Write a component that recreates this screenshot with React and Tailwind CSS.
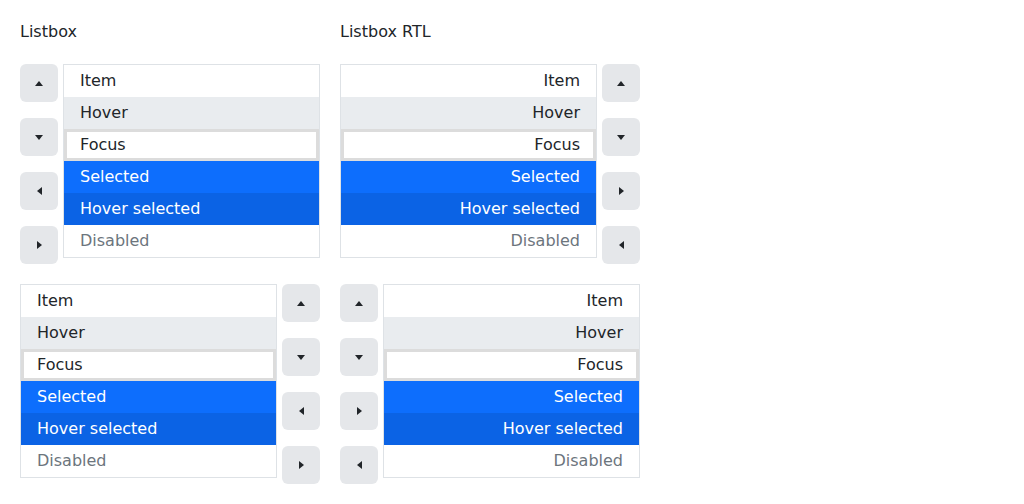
import React from "react";

const Tri = ({ dir }) => {
  const paths = {
    up: "M0 5 L4 0 L8 5 Z",
    down: "M0 0 L8 0 L4 5 Z",
    left: "M5 0 L5 8 L0 4 Z",
    right: "M0 0 L5 4 L0 8 Z",
  };
  const vert = dir === "up" || dir === "down";
  return (
    <svg
      width={vert ? 8 : 5}
      height={vert ? 5 : 8}
      viewBox={vert ? "0 0 8 5" : "0 0 5 8"}
    >
      <path d={paths[dir]} fill="#212529" />
    </svg>
  );
};

const Btn = ({ dir }) => (
  <button className="w-[38px] h-[38px] rounded-md bg-[#e5e7ea] flex items-center justify-center">
    <Tri dir={dir} />
  </button>
);

const Buttons = ({ dirs }) => (
  <div className="flex flex-col gap-4">
    {dirs.map((d, i) => (
      <Btn key={i} dir={d} />
    ))}
  </div>
);

const List = ({ rtl }) => {
  const align = rtl ? "text-right" : "text-left";
  const base = `h-8 px-4 leading-6 py-1 ${align}`;
  return (
    <div className="w-[257px] border border-[#dee2e6] bg-white">
      <div className={`${base} text-[#212529]`}>Item</div>
      <div className={`${base} text-[#212529] bg-[#e9ecef]`}>Hover</div>
      <div className={`${base} text-[#212529] bg-white shadow-[inset_0_0_0_3px_#dcdcdc]`}>Focus</div>
      <div className={`${base} text-white bg-[#0d6efd]`}>Selected</div>
      <div className={`${base} text-white bg-[#0b63e5]`}>Hover selected</div>
      <div className={`${base} text-[#6c757d]`}>Disabled</div>
    </div>
  );
};

export default function App() {
  return (
    <div
      className="p-5 flex gap-5 text-base text-[#212529] bg-white min-h-[504px]"
      style={{ fontFamily: "'DejaVu Sans', sans-serif" }}
    >
      <div className="w-[300px] flex flex-col gap-5">
        <div className="leading-6">Listbox</div>
        <div className="flex gap-[5px] items-start">
          <Buttons dirs={["up", "down", "left", "right"]} />
          <List />
        </div>
        <div className="flex gap-[5px] items-start">
          <List />
          <Buttons dirs={["up", "down", "left", "right"]} />
        </div>
      </div>
      <div className="w-[300px] flex flex-col gap-5">
        <div className="leading-6">Listbox RTL</div>
        <div className="flex gap-[5px] items-start">
          <List rtl />
          <Buttons dirs={["up", "down", "right", "left"]} />
        </div>
        <div className="flex gap-[5px] items-start">
          <Buttons dirs={["up", "down", "right", "left"]} />
          <List rtl />
        </div>
      </div>
    </div>
  );
}
